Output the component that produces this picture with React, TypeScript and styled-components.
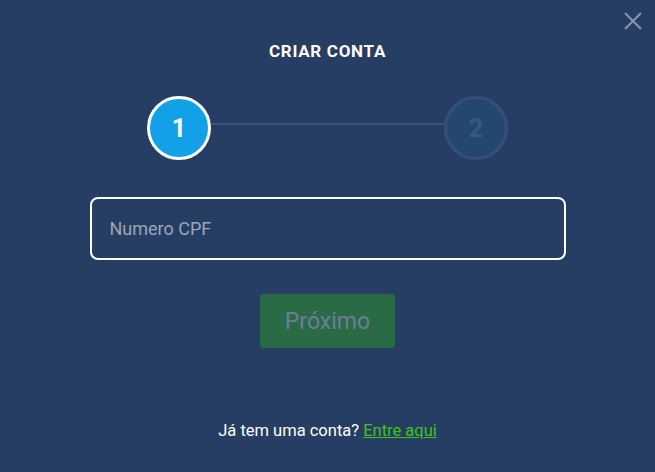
import React from "react";
import styled, { createGlobalStyle } from "styled-components";

const Global = createGlobalStyle`
  html, body { margin: 0; padding: 0; background: #263e63; }
  * { box-sizing: border-box; }
`;

const Modal = styled.div`
  position: relative;
  width: 655px;
  height: 472px;
  background: #263e63;
  font-family: Roboto, "Noto Sans", sans-serif;
  color: #ffffff;
  display: flex;
  flex-direction: column;
  align-items: center;
  padding-top: 41px;
`;

const Close = styled.button`
  position: absolute;
  top: 10px;
  right: 11px;
  width: 22px;
  height: 22px;
  padding: 0;
  border: none;
  background: transparent;
  display: flex;
  align-items: center;
  justify-content: center;
`;

const Title = styled.h1`
  margin: 0;
  font-size: 17px;
  line-height: 20px;
  font-weight: 700;
  letter-spacing: 0.7px;
`;

const Stepper = styled.div`
  margin-top: 35px;
  width: 361px;
  height: 64px;
  display: flex;
  align-items: center;
`;

const Step = styled.div<{ $active?: boolean }>`
  width: 64px;
  height: 64px;
  flex: none;
  border-radius: 50%;
  border: 3px solid ${(p) => (p.$active ? "#ffffff" : "#354f78")};
  background: ${(p) => (p.$active ? "#12a0e6" : "#244770")};
  color: ${(p) => (p.$active ? "#ffffff" : "#395881")};
  display: flex;
  align-items: center;
  justify-content: center;
  font-size: 25px;
  font-weight: 700;
`;

const Line = styled.div`
  flex: 1;
  height: 2px;
  margin-top: -8px;
  background: #3b5479;
`;

const Input = styled.input`
  margin-top: 37px;
  width: 476px;
  height: 63px;
  border: 2px solid #ffffff;
  border-radius: 8px;
  background: transparent;
  padding: 0 18px;
  font-family: Roboto, "Noto Sans", sans-serif;
  font-size: 18px;
  color: #ffffff;
  outline: none;
  &::placeholder { color: #9aa6b9; }
`;

const Button = styled.button`
  margin-top: 34px;
  width: 135px;
  height: 54px;
  border: none;
  border-radius: 4px;
  background: #2a6b45;
  color: #6c7d99;
  font-family: Roboto, "Noto Sans", sans-serif;
  font-size: 23px;
`;

const Footer = styled.p`
  margin: 73px 0 0;
  font-size: 16.5px;
  line-height: 20px;
  color: #ffffff;
`;

const Link = styled.a`
  color: #3fc31c;
  text-decoration: underline;
`;

export default function App() {
  return (
    <>
      <Global />
      <Modal>
        <Close aria-label="Fechar">
          <svg width="20" height="20" viewBox="0 0 20 20">
            <path d="M2 2 L18 18 M18 2 L2 18" stroke="#8b97a8" strokeWidth="2" />
          </svg>
        </Close>
        <Title>CRIAR CONTA</Title>
        <Stepper>
          <Step $active>1</Step>
          <Line />
          <Step>2</Step>
        </Stepper>
        <Input placeholder="Numero CPF" />
        <Button>Próximo</Button>
        <Footer>
          Já tem uma conta? <Link href="#">Entre aqui</Link>
        </Footer>
      </Modal>
    </>
  );
}
